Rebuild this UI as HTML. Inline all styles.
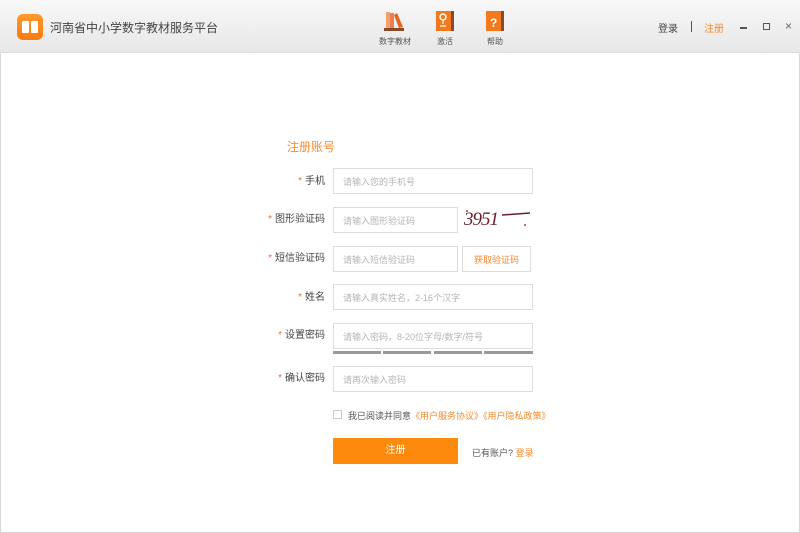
<!DOCTYPE html>
<html><head><meta charset="utf-8"><style>
*{margin:0;padding:0;box-sizing:border-box}
body{width:800px;height:533px;overflow:hidden;background:#fff;font-family:"Liberation Sans","Noto Sans CJK SC",sans-serif;position:relative}
.hd{position:absolute;left:0;top:0;width:800px;height:53px;background:linear-gradient(#f8f8f8,#e7e7e7);border-bottom:1px solid #ddd}
.frame{position:absolute;left:0;top:53px;width:800px;height:480px;border:1px solid #d8d8d8;border-top:none}
.a{position:absolute;white-space:nowrap}
.lbl{position:absolute;right:475px;font-size:10px;color:#444;line-height:14px;margin-top:2px}
.lbl b{color:#f26a4c;font-weight:normal;margin-right:3px}
.in{position:absolute;left:333px;width:200px;height:26px;border:1px solid #ddd;font-size:9px;color:#b5b5b5;line-height:24px;padding-left:9px;padding-top:1px}
.or{color:#f98a2b}
</style></head><body>
<div class="hd">
 <div class="a" style="left:17px;top:14px;width:26px;height:26px;border-radius:6px;background:linear-gradient(#ff9a2e,#f97a10)">
  <div class="a" style="left:5px;top:7px;width:7px;height:12px;background:#fff;border-radius:1px"></div>
  <div class="a" style="left:14px;top:7px;width:7px;height:12px;background:#fff;border-radius:1px"></div>
 </div>
 <div class="a" style="left:50px;top:19px;font-size:12px;color:#444">河南省中小学数字教材服务平台</div>
 <svg class="a" style="left:383px;top:10px" width="22" height="22"><rect x="3" y="2" width="4" height="16" fill="#f3a070"/><rect x="7" y="3" width="4" height="15" fill="#e8824a"/><path d="M11 5 L14 3 L20 17 L16 18Z" fill="#e5651f"/><rect x="1" y="18" width="20" height="3" fill="#8a4a2a"/></svg>
 <div class="a" style="left:379px;top:36px;font-size:8px;color:#555">数字教材</div>
 <svg class="a" style="left:435px;top:10px" width="20" height="22"><rect x="1" y="1" width="16" height="20" fill="#f2791c"/><rect x="16" y="1" width="3" height="20" fill="#8a4a2a"/><circle cx="8" cy="7" r="3" fill="none" stroke="#fff" stroke-width="1.5"/><path d="M8 10v4M5 16h6" stroke="#fff" stroke-width="1.2"/></svg>
 <div class="a" style="left:437px;top:36px;font-size:8px;color:#555">激活</div>
 <svg class="a" style="left:485px;top:10px" width="20" height="22"><rect x="1" y="1" width="16" height="20" fill="#f2791c"/><rect x="16" y="1" width="3" height="20" fill="#8a4a2a"/><text x="5" y="17" font-size="12" fill="#fff" font-family="Liberation Sans" font-weight="bold">?</text></svg>
 <div class="a" style="left:487px;top:36px;font-size:8px;color:#555">帮助</div>
 <div class="a" style="left:658px;top:20px;font-size:10px;color:#444">登录</div>
 <div class="a" style="left:691px;top:21px;width:1px;height:11px;background:#555"></div>
 <div class="a or" style="left:704px;top:20px;font-size:10px">注册</div>
 <div class="a" style="left:740px;top:27px;width:7px;height:2px;background:#555"></div>
 <div class="a" style="left:763px;top:23px;width:7px;height:7px;border:1.5px solid #555"></div>
 <div class="a" style="left:785px;top:19px;font-size:12px;color:#666">×</div>
</div>
<div class="frame"></div>
<div class="a or" style="left:287px;top:138px;font-size:12px">注册账号</div>
<div class="lbl" style="top:173px"><b>*</b>手机</div>
<div class="in" style="top:168px">请输入您的手机号</div>
<div class="lbl" style="top:211px"><b>*</b>图形验证码</div>
<div class="in" style="top:207px;width:125px">请输入图形验证码</div>
<svg class="a" style="left:462px;top:207px" width="70" height="24"><text x="2" y="18" font-size="19" font-family="Liberation Serif" fill="#6a1f2a" letter-spacing="-1" font-style="italic">3951</text><path d="M40 8 L68 6" stroke="#6a1f2a" stroke-width="1.5"/><circle cx="5" cy="4" r="1" fill="#a44"/><circle cx="63" cy="18" r="1" fill="#a44"/></svg>
<div class="lbl" style="top:250px"><b>*</b>短信验证码</div>
<div class="in" style="top:246px;width:125px">请输入短信验证码</div>
<div class="in or" style="top:246px;left:462px;width:69px;padding:1px 0 0;text-align:center;color:#f98a2b">获取验证码</div>
<div class="lbl" style="top:289px"><b>*</b>姓名</div>
<div class="in" style="top:284px">请输入真实姓名，2-16个汉字</div>
<div class="lbl" style="top:327px"><b>*</b>设置密码</div>
<div class="in" style="top:323px">请输入密码，8-20位字母/数字/符号</div>
<div class="a" style="left:333px;top:351px;width:48px;height:3px;background:#999"></div>
<div class="a" style="left:383px;top:351px;width:48px;height:3px;background:#999"></div>
<div class="a" style="left:434px;top:351px;width:48px;height:3px;background:#999"></div>
<div class="a" style="left:484px;top:351px;width:49px;height:3px;background:#999"></div>
<div class="lbl" style="top:370px"><b>*</b>确认密码</div>
<div class="in" style="top:366px">请再次输入密码</div>
<div class="a" style="left:333px;top:410px;width:9px;height:9px;border:1px solid #ccc"></div>
<div class="a" style="left:348px;top:409px;font-size:9px;color:#555">我已阅读并同意<span class="or">《用户服务协议》《用户隐私政策》</span></div>
<div class="a" style="left:333px;top:438px;width:125px;height:26px;background:#fd8a0c;color:#fff;font-size:10px;text-align:center;line-height:26px">注册</div>
<div class="a" style="left:472px;top:446px;font-size:9px;color:#555">已有账户? <span class="or">登录</span></div>
</body></html>
